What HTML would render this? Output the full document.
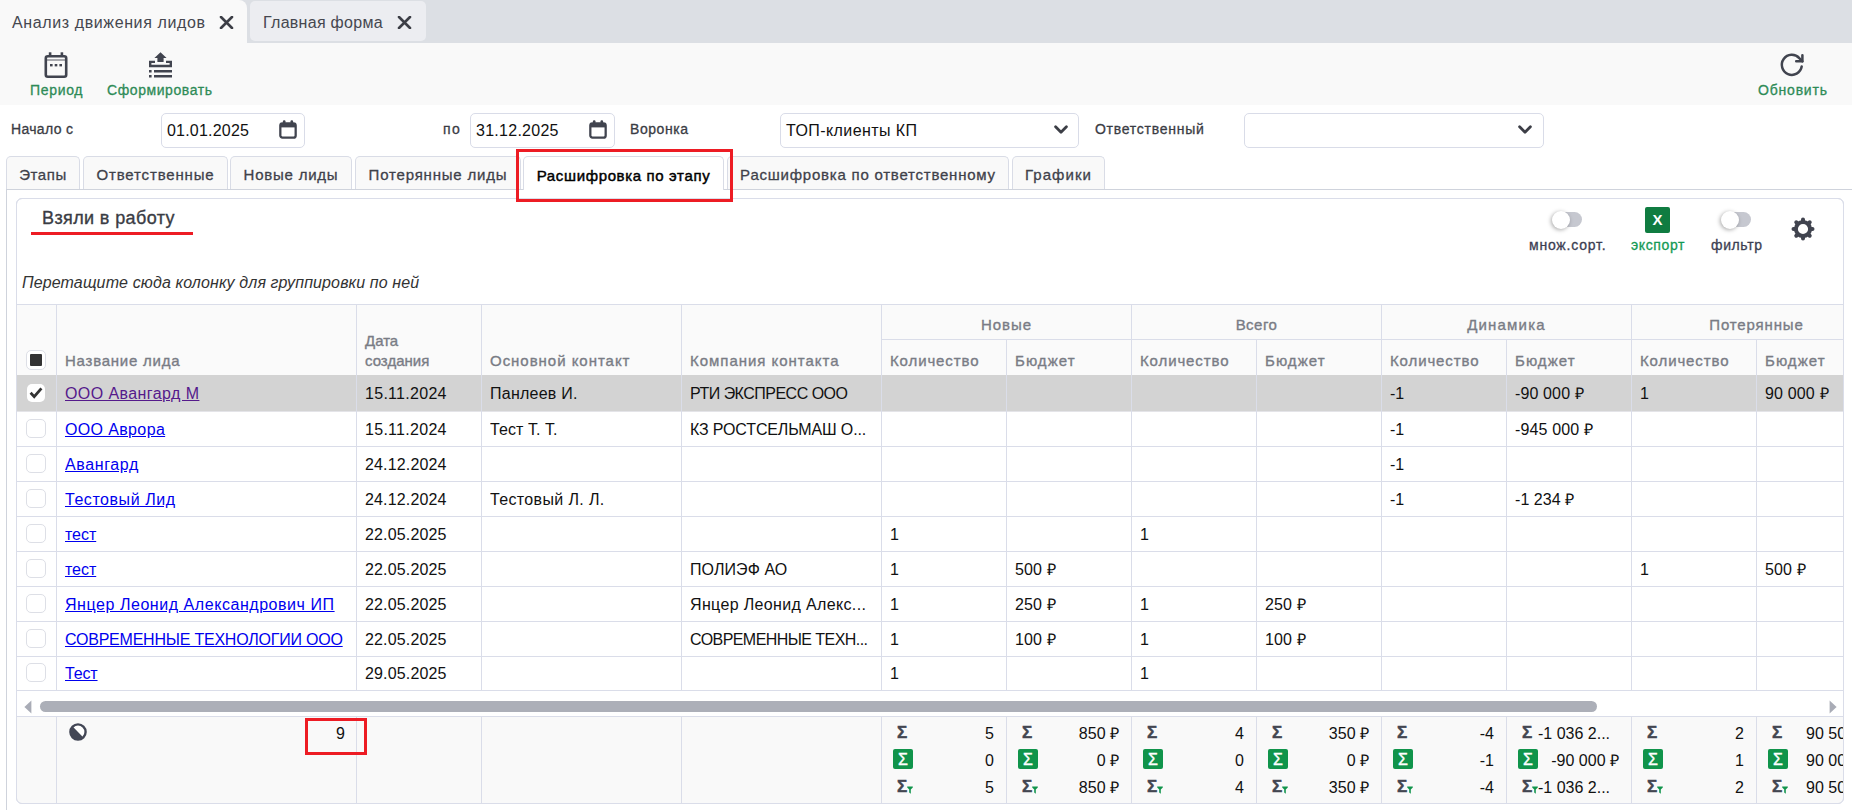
<!DOCTYPE html>
<html lang="ru"><head><meta charset="utf-8"><title>Анализ движения лидов</title>
<style>
*{box-sizing:border-box;margin:0;padding:0}
html,body{width:1852px;height:810px;overflow:hidden;background:#fff}
body{font-family:"Liberation Sans",sans-serif;font-size:16px;color:#000;position:relative}
.abs{position:absolute}
#topbar{position:absolute;left:0;top:0;width:1852px;height:43px;background:#dcdfe4}
.ttab{position:absolute;white-space:nowrap;font-size:16px;color:#45474f}
#toolbar{position:absolute;left:0;top:43px;width:1852px;height:62px;background:#f9f9f9}
.tbl{position:absolute;font-size:14px;-webkit-text-stroke:0.3px;color:#2e8b57;white-space:nowrap;text-align:center}
.flabel{position:absolute;font-size:14px;-webkit-text-stroke:0.3px;color:#3a3c44;white-space:nowrap}
.finput{position:absolute;top:113px;height:35px;border:1px solid #d9dce8;border-radius:5px;background:#fff;font-size:16px;color:#111;line-height:33px;padding-left:5px;white-space:nowrap}
.itab{position:absolute;top:156px;height:33px;border:1px solid #d9dce6;border-bottom:none;border-radius:5px 5px 0 0;background:#f9f9f9;font-size:15px;-webkit-text-stroke:0.3px;color:#3f414a;text-align:center;line-height:35px;white-space:nowrap}
.itab.act{background:#fff;color:#000;height:34px;line-height:37px;-webkit-text-stroke:0.45px}
.cell{position:absolute;white-space:nowrap;overflow:hidden;font-size:16px;line-height:20px;color:#111}
.hd{position:absolute;white-space:nowrap;font-size:15px;-webkit-text-stroke:0.35px;color:#797c85;line-height:20px}
.vl{position:absolute;width:1px;background:#dadde9}
.hl{position:absolute;height:1px;background:#dadde9}
a.lnk{color:#0000ee;text-decoration:underline}
a.lnk.v{color:#551a8b}
.cb{position:absolute;left:26px;width:20px;height:19px;border:1px solid #dddfe6;border-radius:5px;background:#fff}
.sv{position:absolute;white-space:nowrap;font-size:16px;line-height:20px;color:#111;text-align:right}
.sg{position:absolute;font-size:17px;font-weight:bold;line-height:20px;color:#434651;-webkit-text-stroke:0.5px #434651}
.sgb{position:absolute;width:20px;height:20px;background:#10944b;border-radius:2px;color:#fff;font-size:16px;-webkit-text-stroke:0.4px #fff;line-height:21px;text-align:center}
.tgl{position:absolute;font-size:14px;-webkit-text-stroke:0.3px;color:#3b3e52;white-space:nowrap}
</style></head><body>

<div id="topbar">
<div class="abs" style="left:0;top:0;width:247px;height:43px;background:#f9f9f9;border-radius:0 8px 0 0"></div>
<div class="abs" style="left:250px;top:1px;width:176px;height:40px;background:#ecedf1;border-radius:5px"></div>
<div class="ttab" id="tt1" style="letter-spacing:0.61px;left:12px;top:14px">Анализ движения лидов</div>
<div class="ttab" id="tt2" style="letter-spacing:0.28px;left:263px;top:14px">Главная форма</div>
<svg class="abs" style="left:219px;top:16px" width="15" height="13" viewBox="0 0 15 13"><path d="M2 1 L13 12 M13 1 L2 12" stroke="#3c3e46" stroke-width="2.6" stroke-linecap="round" fill="none"/></svg>
<svg class="abs" style="left:397px;top:16px" width="15" height="13" viewBox="0 0 15 13"><path d="M2 1 L13 12 M13 1 L2 12" stroke="#3c3e46" stroke-width="2.6" stroke-linecap="round" fill="none"/></svg>
</div>
<div id="toolbar"></div>
<svg class="abs" style="left:44px;top:52px" width="24" height="26" viewBox="0 0 24 26">
<rect x="1.8" y="4.3" width="20.4" height="20.4" rx="2" ry="2" fill="none" stroke="#41444f" stroke-width="2.6"/>
<rect x="4.8" y="0.3" width="2.6" height="4" fill="#41444f"/><rect x="16.6" y="0.3" width="2.6" height="4" fill="#41444f"/>
<rect x="2" y="7.2" width="20" height="1.6" fill="#41444f" opacity="0.55"/>
<rect x="6" y="12" width="2.6" height="2.4" fill="#41444f"/><rect x="10.7" y="12" width="2.6" height="2.4" fill="#41444f"/><rect x="15.4" y="12" width="2.6" height="2.4" fill="#41444f"/>
</svg>
<div class="tbl" id="tb1" style="letter-spacing:0.68px;left:30px;top:82px">Период</div>
<svg class="abs" style="left:148px;top:52px" width="25" height="26" viewBox="0 0 25 26">
<path d="M12.5 0.3 L18.6 6 L15.6 6 L15.6 10 L9.4 10 L9.4 6 L6.4 6 Z" fill="#41444f"/>
<path d="M1 8.8 L7 8.8 L7 11 L3.4 11 L3.4 12.7 L21.6 12.7 L21.6 11 L18 11 L18 8.8 L24 8.8 L24 15.2 L1 15.2 Z" fill="#41444f"/>
<rect x="1" y="18" width="2.6" height="2.5" fill="#41444f"/><rect x="6" y="18" width="18" height="2.5" fill="#41444f"/>
<rect x="1" y="23" width="2.6" height="2.5" fill="#41444f"/><rect x="6" y="23" width="18" height="2.5" fill="#41444f"/>
</svg>
<div class="tbl" id="tb2" style="letter-spacing:0.57px;left:107px;top:82px">Сформировать</div>
<svg class="abs" style="left:1779px;top:53px" width="27" height="25" viewBox="0 0 27 25">
<path d="M22.70 13.59 A10.00 10.00 0 1 1 20.28 5.16 L23.4 8.3" fill="none" stroke="#41444f" stroke-width="2.5" stroke-linecap="round" stroke-linejoin="round"/>
<path d="M23.4 2.2 L23.4 8.3 L17.2 8.3" fill="none" stroke="#41444f" stroke-width="2.5" stroke-linecap="round" stroke-linejoin="round"/>
</svg>
<div class="tbl" id="tb3" style="letter-spacing:0.80px;left:1758px;top:82px">Обновить</div>
<div class="flabel" id="fl1" style="letter-spacing:0.33px;left:11px;top:121px">Начало с</div>
<div class="finput" id="fi1" style="letter-spacing:0.21px;left:161px;width:144px">01.01.2025</div>
<div class="flabel" id="fl2" style="letter-spacing:1.38px;left:443px;top:121px">по</div>
<div class="finput" id="fi2" style="letter-spacing:0.27px;left:470px;width:145px">31.12.2025</div>
<div class="flabel" id="fl3" style="letter-spacing:0.56px;left:630px;top:121px">Воронка</div>
<div class="finput" id="fi3" style="letter-spacing:0.41px;left:780px;width:299px">ТОП-клиенты КП</div>
<div class="flabel" id="fl4" style="letter-spacing:0.73px;left:1095px;top:121px">Ответственный</div>
<div class="finput" id="fi4" style="left:1244px;width:300px"></div>
<svg class="abs" style="left:279px;top:120px" width="18" height="19" viewBox="0 0 19 19" preserveAspectRatio="none">
<rect x="1.4" y="3.4" width="16.2" height="14.2" rx="2.2" fill="none" stroke="#41444f" stroke-width="2.4"/>
<rect x="1.4" y="3.4" width="16.2" height="4" fill="#41444f"/>
<rect x="4.2" y="0.3" width="2.6" height="4" rx="1" fill="#41444f"/><rect x="12.2" y="0.3" width="2.6" height="4" rx="1" fill="#41444f"/>
</svg>
<svg class="abs" style="left:589px;top:120px" width="18" height="19" viewBox="0 0 19 19" preserveAspectRatio="none">
<rect x="1.4" y="3.4" width="16.2" height="14.2" rx="2.2" fill="none" stroke="#41444f" stroke-width="2.4"/>
<rect x="1.4" y="3.4" width="16.2" height="4" fill="#41444f"/>
<rect x="4.2" y="0.3" width="2.6" height="4" rx="1" fill="#41444f"/><rect x="12.2" y="0.3" width="2.6" height="4" rx="1" fill="#41444f"/>
</svg>
<svg class="abs" style="left:1054px;top:125px" width="14" height="10" viewBox="0 0 14 10"><path d="M1.6 1.8 L7 7.2 L12.4 1.8" fill="none" stroke="#3c3e46" stroke-width="2.8" stroke-linecap="round" stroke-linejoin="round"/></svg>
<svg class="abs" style="left:1518px;top:125px" width="14" height="10" viewBox="0 0 14 10"><path d="M1.6 1.8 L7 7.2 L12.4 1.8" fill="none" stroke="#3c3e46" stroke-width="2.8" stroke-linecap="round" stroke-linejoin="round"/></svg>
<div class="hl" style="left:6px;top:189px;width:1846px;background:#cfd3dc"></div>
<div class="vl" style="left:6px;top:189px;height:621px;background:#cfd3dc"></div>
<div class="itab" id="it0" style="letter-spacing:0.57px;left:6px;width:74px">Этапы</div>
<div class="itab" id="it1" style="letter-spacing:0.85px;left:83px;width:145px">Ответственные</div>
<div class="itab" id="it2" style="letter-spacing:0.77px;left:230px;width:122px">Новые лиды</div>
<div class="itab" id="it3" style="letter-spacing:0.81px;left:355px;width:166px">Потерянные лиды</div>
<div class="itab" id="it4" style="letter-spacing:0.77px;left:727px;width:282px">Расшифровка по ответственному</div>
<div class="itab" id="it5" style="letter-spacing:1.06px;left:1012px;width:93px">Графики</div>
<div class="itab act" id="ita" style="letter-spacing:0.64px;left:523px;width:201px">Расшифровка по этапу</div>
<div class="abs" style="left:516px;top:149px;width:217px;height:53px;border:3px solid #ed1c24;z-index:20"></div>
<div class="abs" id="panel" style="left:16px;top:198px;width:1828px;height:606px;border:1px solid #dadde9;border-radius:6px;overflow:hidden">
</div>
<div class="abs" id="ttl" style="letter-spacing:0.38px;left:42px;top:208px;font-size:18px;-webkit-text-stroke:0.35px;color:#3a3c44;white-space:nowrap">Взяли в работу</div>
<div class="abs" style="left:31px;top:232px;width:162px;height:3px;background:#ed1c24"></div>
<div class="abs" id="grp" style="letter-spacing:0.12px;left:22px;top:273px;font-size:16px;font-style:italic;color:#333;white-space:nowrap;line-height:20px">Перетащите сюда колонку для группировки по ней</div>
<div class="abs" style="left:1555px;top:212px;width:27px;height:15px;border-radius:8px;background:#c6c8d0"></div>
<div class="abs" style="left:1551.6px;top:210.5px;width:18.6px;height:18.6px;border-radius:10px;background:#fff;box-shadow:-1px 1px 4px rgba(0,0,0,.35)"></div>
<div class="abs" style="left:1724px;top:212px;width:27px;height:15px;border-radius:8px;background:#c6c8d0"></div>
<div class="abs" style="left:1720.6px;top:210.5px;width:18.6px;height:18.6px;border-radius:10px;background:#fff;box-shadow:-1px 1px 4px rgba(0,0,0,.35)"></div>
<div class="tgl" id="tg1" style="letter-spacing:0.79px;left:1529px;top:237px">множ.сорт.</div>
<div class="tgl" id="tg2" style="letter-spacing:0.64px;left:1631px;top:237px;color:#149a55">экспорт</div>
<div class="tgl" id="tg3" style="letter-spacing:0.62px;left:1711px;top:237px">фильтр</div>
<div class="abs" id="xl" style="left:1645px;top:207px;width:25px;height:26px;background:#107c41;border-radius:2px;color:#fff;font-weight:bold;font-size:15px;line-height:26px;text-align:center">X</div>
<svg class="abs" style="left:1791px;top:217px" width="24" height="24" viewBox="0 0 24 24"><circle cx="12" cy="12" r="7.1" fill="none" stroke="#41444f" stroke-width="4"/><path d="M12.00 3.80 L12.00 2.50 M17.80 6.20 L18.72 5.28 M20.20 12.00 L21.50 12.00 M17.80 17.80 L18.72 18.72 M12.00 20.20 L12.00 21.50 M6.20 17.80 L5.28 18.72 M3.80 12.00 L2.50 12.00 M6.20 6.20 L5.28 5.28" fill="none" stroke="#41444f" stroke-width="4" stroke-linecap="round"/></svg>
<div class="abs" style="left:17px;top:305px;width:1826px;height:70px;background:#fafafa"></div>
<div class="hl" style="left:17px;top:304px;width:1826px"></div>
<div class="hl" style="left:882px;top:339px;width:961px"></div>
<div class="hl" style="left:17px;top:375px;width:1826px"></div>
<div class="abs" style="left:17px;top:375px;width:1826px;height:36px;background:#d3d3d3"></div><div class="hl" style="left:17px;top:411px;width:1826px;background:#e4e4e8"></div>
<div class="abs" style="left:17px;top:717px;width:1826px;height:86px;background:#f9f9f9;border-radius:0 0 5px 5px"></div>
<div class="hl" style="left:17px;top:716px;width:1826px"></div>
<div class="hl" style="left:17px;top:446px;width:1826px"></div>
<div class="hl" style="left:17px;top:481px;width:1826px"></div>
<div class="hl" style="left:17px;top:516px;width:1826px"></div>
<div class="hl" style="left:17px;top:551px;width:1826px"></div>
<div class="hl" style="left:17px;top:586px;width:1826px"></div>
<div class="hl" style="left:17px;top:621px;width:1826px"></div>
<div class="hl" style="left:17px;top:656px;width:1826px"></div>
<div class="hl" style="left:17px;top:690px;width:1826px"></div>
<div class="vl" style="left:56px;top:305px;height:385px"></div>
<div class="vl" style="left:56px;top:717px;height:86px"></div>
<div class="vl" style="left:356px;top:305px;height:385px"></div>
<div class="vl" style="left:356px;top:717px;height:86px"></div>
<div class="vl" style="left:481px;top:305px;height:385px"></div>
<div class="vl" style="left:481px;top:717px;height:86px"></div>
<div class="vl" style="left:681px;top:305px;height:385px"></div>
<div class="vl" style="left:681px;top:717px;height:86px"></div>
<div class="vl" style="left:881px;top:305px;height:385px"></div>
<div class="vl" style="left:881px;top:717px;height:86px"></div>
<div class="vl" style="left:1006px;top:340px;height:350px"></div>
<div class="vl" style="left:1006px;top:717px;height:86px"></div>
<div class="vl" style="left:1131px;top:305px;height:385px"></div>
<div class="vl" style="left:1131px;top:717px;height:86px"></div>
<div class="vl" style="left:1256px;top:340px;height:350px"></div>
<div class="vl" style="left:1256px;top:717px;height:86px"></div>
<div class="vl" style="left:1381px;top:305px;height:385px"></div>
<div class="vl" style="left:1381px;top:717px;height:86px"></div>
<div class="vl" style="left:1506px;top:340px;height:350px"></div>
<div class="vl" style="left:1506px;top:717px;height:86px"></div>
<div class="vl" style="left:1631px;top:305px;height:385px"></div>
<div class="vl" style="left:1631px;top:717px;height:86px"></div>
<div class="vl" style="left:1756px;top:340px;height:350px"></div>
<div class="vl" style="left:1756px;top:717px;height:86px"></div>
<div class="abs" style="left:26px;top:350px;width:20px;height:20px;border:1px solid #dddfe6;border-radius:5px;background:#fff"></div>
<div class="abs" style="left:30px;top:354px;width:12px;height:12px;background:#333;border-radius:1px"></div>
<div class="hd" id="h0" style="letter-spacing:0.76px;left:65px;top:351px">Название лида</div>
<div class="hd" id="h1" style="left:365px;top:331px">Дата<br>создания</div>
<div class="hd" id="h2" style="letter-spacing:0.97px;left:490px;top:351px">Основной контакт</div>
<div class="hd" id="h3" style="letter-spacing:0.97px;left:690px;top:351px">Компания контакта</div>
<div class="hd" id="g0" style="letter-spacing:0.93px;left:882px;top:315px;width:249px;text-align:center">Новые</div>
<div class="hd" id="k0" style="letter-spacing:0.88px;left:890px;top:351px">Количество</div>
<div class="hd" id="b0" style="letter-spacing:1.05px;left:1015px;top:351px">Бюджет</div>
<div class="hd" id="g1" style="letter-spacing:0.48px;left:1132px;top:315px;width:249px;text-align:center">Всего</div>
<div class="hd" id="k1" style="letter-spacing:0.88px;left:1140px;top:351px">Количество</div>
<div class="hd" id="b1" style="letter-spacing:1.05px;left:1265px;top:351px">Бюджет</div>
<div class="hd" id="g2" style="letter-spacing:1.20px;left:1382px;top:315px;width:249px;text-align:center">Динамика</div>
<div class="hd" id="k2" style="letter-spacing:0.88px;left:1390px;top:351px">Количество</div>
<div class="hd" id="b2" style="letter-spacing:1.05px;left:1515px;top:351px">Бюджет</div>
<div class="hd" id="g3" style="letter-spacing:0.85px;left:1632px;top:315px;width:249px;text-align:center">Потерянные</div>
<div class="hd" id="k3" style="letter-spacing:0.88px;left:1640px;top:351px">Количество</div>
<div class="hd" id="b3" style="letter-spacing:1.05px;left:1765px;top:351px">Бюджет</div>
<div class="cb" style="top:384px;height:18px;left:27px;width:18px;border:none"></div>
<svg class="abs" style="left:29px;top:386px" width="14" height="13" viewBox="0 0 14 13"><path d="M1.6 6.8 L5.2 10.6 L12.4 2.4" fill="none" stroke="#333" stroke-width="2.8"/></svg>
<div class="cell" id="c0_0" style="letter-spacing:0.42px;left:65px;top:384px;width:283px"><a class="lnk v">ООО Авангард М</a></div>
<div class="cell" id="c0_1" style="letter-spacing:0.29px;left:365px;top:384px;width:108px">15.11.2024</div>
<div class="cell" id="c0_2" style="letter-spacing:0.25px;left:490px;top:384px;width:183px">Панлеев И.</div>
<div class="cell" id="c0_3" style="letter-spacing:-0.51px;left:690px;top:384px;width:183px">РТИ ЭКСПРЕСС ООО</div>
<div class="cell" id="c0_8" style="left:1390px;top:384px;width:108px">-1</div>
<div class="cell" id="c0_9" style="letter-spacing:0.13px;left:1515px;top:384px;width:108px">-90 000 ₽</div>
<div class="cell" id="c0_10" style="left:1640px;top:384px;width:108px">1</div>
<div class="cell" id="c0_11" style="letter-spacing:0.16px;left:1765px;top:384px;width:108px">90 000 ₽</div>
<div class="cb" style="top:419px"></div>
<div class="cell" id="c1_0" style="letter-spacing:0.36px;left:65px;top:420px;width:283px"><a class="lnk">ООО Аврора</a></div>
<div class="cell" id="c1_1" style="letter-spacing:0.29px;left:365px;top:420px;width:108px">15.11.2024</div>
<div class="cell" id="c1_2" style="letter-spacing:0.07px;left:490px;top:420px;width:183px">Тест Т. Т.</div>
<div class="cell" id="c1_3" style="letter-spacing:-0.13px;left:690px;top:420px;width:183px">КЗ РОСТСЕЛЬМАШ О...</div>
<div class="cell" id="c1_8" style="left:1390px;top:420px;width:108px">-1</div>
<div class="cell" id="c1_9" style="letter-spacing:0.15px;left:1515px;top:420px;width:108px">-945 000 ₽</div>
<div class="cb" style="top:454px"></div>
<div class="cell" id="c2_0" style="letter-spacing:0.61px;left:65px;top:455px;width:283px"><a class="lnk">Авангард</a></div>
<div class="cell" id="c2_1" style="letter-spacing:0.16px;left:365px;top:455px;width:108px">24.12.2024</div>
<div class="cell" id="c2_8" style="left:1390px;top:455px;width:108px">-1</div>
<div class="cb" style="top:489px"></div>
<div class="cell" id="c3_0" style="letter-spacing:0.55px;left:65px;top:490px;width:283px"><a class="lnk">Тестовый Лид</a></div>
<div class="cell" id="c3_1" style="letter-spacing:0.16px;left:365px;top:490px;width:108px">24.12.2024</div>
<div class="cell" id="c3_2" style="letter-spacing:0.36px;left:490px;top:490px;width:183px">Тестовый Л. Л.</div>
<div class="cell" id="c3_8" style="left:1390px;top:490px;width:108px">-1</div>
<div class="cell" id="c3_9" style="letter-spacing:0.06px;left:1515px;top:490px;width:108px">-1 234 ₽</div>
<div class="cb" style="top:524px"></div>
<div class="cell" id="c4_0" style="letter-spacing:-0.04px;left:65px;top:525px;width:283px"><a class="lnk">тест</a></div>
<div class="cell" id="c4_1" style="letter-spacing:0.16px;left:365px;top:525px;width:108px">22.05.2025</div>
<div class="cell" id="c4_4" style="left:890px;top:525px;width:108px">1</div>
<div class="cell" id="c4_6" style="left:1140px;top:525px;width:108px">1</div>
<div class="cb" style="top:559px"></div>
<div class="cell" id="c5_0" style="letter-spacing:-0.04px;left:65px;top:560px;width:283px"><a class="lnk">тест</a></div>
<div class="cell" id="c5_1" style="letter-spacing:0.16px;left:365px;top:560px;width:108px">22.05.2025</div>
<div class="cell" id="c5_3" style="letter-spacing:0.08px;left:690px;top:560px;width:183px">ПОЛИЭФ АО</div>
<div class="cell" id="c5_4" style="left:890px;top:560px;width:108px">1</div>
<div class="cell" id="c5_5" style="letter-spacing:0.09px;left:1015px;top:560px;width:108px">500 ₽</div>
<div class="cell" id="c5_10" style="left:1640px;top:560px;width:108px">1</div>
<div class="cell" id="c5_11" style="letter-spacing:0.09px;left:1765px;top:560px;width:108px">500 ₽</div>
<div class="cb" style="top:594px"></div>
<div class="cell" id="c6_0" style="letter-spacing:0.55px;left:65px;top:595px;width:283px"><a class="lnk">Янцер Леонид Александрович ИП</a></div>
<div class="cell" id="c6_1" style="letter-spacing:0.16px;left:365px;top:595px;width:108px">22.05.2025</div>
<div class="cell" id="c6_3" style="letter-spacing:0.35px;left:690px;top:595px;width:183px">Янцер Леонид Алекс...</div>
<div class="cell" id="c6_4" style="left:890px;top:595px;width:108px">1</div>
<div class="cell" id="c6_5" style="letter-spacing:0.09px;left:1015px;top:595px;width:108px">250 ₽</div>
<div class="cell" id="c6_6" style="left:1140px;top:595px;width:108px">1</div>
<div class="cell" id="c6_7" style="letter-spacing:0.09px;left:1265px;top:595px;width:108px">250 ₽</div>
<div class="cb" style="top:629px"></div>
<div class="cell" id="c7_0" style="letter-spacing:-0.22px;left:65px;top:630px;width:283px"><a class="lnk">СОВРЕМЕННЫЕ ТЕХНОЛОГИИ ООО</a></div>
<div class="cell" id="c7_1" style="letter-spacing:0.16px;left:365px;top:630px;width:108px">22.05.2025</div>
<div class="cell" id="c7_3" style="letter-spacing:-0.56px;left:690px;top:630px;width:183px">СОВРЕМЕННЫЕ ТЕХН...</div>
<div class="cell" id="c7_4" style="left:890px;top:630px;width:108px">1</div>
<div class="cell" id="c7_5" style="letter-spacing:0.09px;left:1015px;top:630px;width:108px">100 ₽</div>
<div class="cell" id="c7_6" style="left:1140px;top:630px;width:108px">1</div>
<div class="cell" id="c7_7" style="letter-spacing:0.09px;left:1265px;top:630px;width:108px">100 ₽</div>
<div class="cb" style="top:663px"></div>
<div class="cell" id="c8_0" style="letter-spacing:-0.14px;left:65px;top:664px;width:283px"><a class="lnk">Тест</a></div>
<div class="cell" id="c8_1" style="letter-spacing:0.16px;left:365px;top:664px;width:108px">29.05.2025</div>
<div class="cell" id="c8_4" style="left:890px;top:664px;width:108px">1</div>
<div class="cell" id="c8_6" style="left:1140px;top:664px;width:108px">1</div>
<svg class="abs" style="left:24px;top:700px" width="8" height="14" viewBox="0 0 8 14"><path d="M7.4 0.4 L0.4 7 L7.4 13.6 Z" fill="#a9acb6"/></svg>
<svg class="abs" style="left:1829px;top:700px" width="8" height="14" viewBox="0 0 8 14"><path d="M0.6 0.4 L7.6 7 L0.6 13.6 Z" fill="#a9acb6"/></svg>
<div class="abs" style="left:40px;top:701px;width:1557px;height:11px;border-radius:6px;background:#acafb8"></div>
<svg class="abs" style="left:69px;top:723px" width="18" height="18" viewBox="0 0 18 18"><circle cx="9" cy="9" r="7.6" fill="#fff" stroke="#434756" stroke-width="2.4"/><path d="M3.6 3.6 A7.6 7.6 0 0 0 14.4 14.4 Z" fill="#434756"/></svg>
<div class="sv" id="cnt" style="left:300px;top:724px;width:45px">9</div>
<div class="abs" style="left:305px;top:718px;width:62px;height:37px;border:3px solid #ed1c24;z-index:20"></div>
<div class="sv" id="s0_0" style="left:894px;top:724px;width:100px">5</div>
<div class="sg" style="left:897px;top:723px">Σ</div>
<div class="sv" id="s0_1" style="left:894px;top:751px;width:100px">0</div>
<div class="sgb" style="left:893px;top:749px">Σ</div>
<div class="sv" id="s0_2" style="left:894px;top:778px;width:100px">5</div>
<div class="sg" style="left:897px;top:777px">Σ</div>
<svg class="abs" style="left:907px;top:786px" width="6" height="8" viewBox="0 0 6 8"><path d="M0.2 0.4 H5.8 V1.4 L3.8 3.6 V7.8 L2.2 6.6 V3.6 L0.2 1.4 Z" fill="#10944b"/></svg>
<div class="sv" id="s1_0" style="left:1019px;top:724px;width:100px">850 ₽</div>
<div class="sg" style="left:1022px;top:723px">Σ</div>
<div class="sv" id="s1_1" style="left:1019px;top:751px;width:100px">0 ₽</div>
<div class="sgb" style="left:1018px;top:749px">Σ</div>
<div class="sv" id="s1_2" style="left:1019px;top:778px;width:100px">850 ₽</div>
<div class="sg" style="left:1022px;top:777px">Σ</div>
<svg class="abs" style="left:1032px;top:786px" width="6" height="8" viewBox="0 0 6 8"><path d="M0.2 0.4 H5.8 V1.4 L3.8 3.6 V7.8 L2.2 6.6 V3.6 L0.2 1.4 Z" fill="#10944b"/></svg>
<div class="sv" id="s2_0" style="left:1144px;top:724px;width:100px">4</div>
<div class="sg" style="left:1147px;top:723px">Σ</div>
<div class="sv" id="s2_1" style="left:1144px;top:751px;width:100px">0</div>
<div class="sgb" style="left:1143px;top:749px">Σ</div>
<div class="sv" id="s2_2" style="left:1144px;top:778px;width:100px">4</div>
<div class="sg" style="left:1147px;top:777px">Σ</div>
<svg class="abs" style="left:1157px;top:786px" width="6" height="8" viewBox="0 0 6 8"><path d="M0.2 0.4 H5.8 V1.4 L3.8 3.6 V7.8 L2.2 6.6 V3.6 L0.2 1.4 Z" fill="#10944b"/></svg>
<div class="sv" id="s3_0" style="left:1269px;top:724px;width:100px">350 ₽</div>
<div class="sg" style="left:1272px;top:723px">Σ</div>
<div class="sv" id="s3_1" style="left:1269px;top:751px;width:100px">0 ₽</div>
<div class="sgb" style="left:1268px;top:749px">Σ</div>
<div class="sv" id="s3_2" style="left:1269px;top:778px;width:100px">350 ₽</div>
<div class="sg" style="left:1272px;top:777px">Σ</div>
<svg class="abs" style="left:1282px;top:786px" width="6" height="8" viewBox="0 0 6 8"><path d="M0.2 0.4 H5.8 V1.4 L3.8 3.6 V7.8 L2.2 6.6 V3.6 L0.2 1.4 Z" fill="#10944b"/></svg>
<div class="sv" id="s4_0" style="left:1394px;top:724px;width:100px">-4</div>
<div class="sg" style="left:1397px;top:723px">Σ</div>
<div class="sv" id="s4_1" style="left:1394px;top:751px;width:100px">-1</div>
<div class="sgb" style="left:1393px;top:749px">Σ</div>
<div class="sv" id="s4_2" style="left:1394px;top:778px;width:100px">-4</div>
<div class="sg" style="left:1397px;top:777px">Σ</div>
<svg class="abs" style="left:1407px;top:786px" width="6" height="8" viewBox="0 0 6 8"><path d="M0.2 0.4 H5.8 V1.4 L3.8 3.6 V7.8 L2.2 6.6 V3.6 L0.2 1.4 Z" fill="#10944b"/></svg>
<div class="sv" id="s5_0" style="left:1538px;top:724px;text-align:left;width:90px">-1 036 2...</div>
<div class="sg" style="left:1522px;top:723px">Σ</div>
<div class="sv" id="s5_1" style="left:1519px;top:751px;width:100px">-90 000 ₽</div>
<div class="sgb" style="left:1518px;top:749px">Σ</div>
<div class="sv" id="s5_2" style="left:1538px;top:778px;text-align:left;width:90px">-1 036 2...</div>
<div class="sg" style="left:1522px;top:777px">Σ</div>
<svg class="abs" style="left:1532px;top:786px" width="6" height="8" viewBox="0 0 6 8"><path d="M0.2 0.4 H5.8 V1.4 L3.8 3.6 V7.8 L2.2 6.6 V3.6 L0.2 1.4 Z" fill="#10944b"/></svg>
<div class="sv" id="s6_0" style="left:1644px;top:724px;width:100px">2</div>
<div class="sg" style="left:1647px;top:723px">Σ</div>
<div class="sv" id="s6_1" style="left:1644px;top:751px;width:100px">1</div>
<div class="sgb" style="left:1643px;top:749px">Σ</div>
<div class="sv" id="s6_2" style="left:1644px;top:778px;width:100px">2</div>
<div class="sg" style="left:1647px;top:777px">Σ</div>
<svg class="abs" style="left:1657px;top:786px" width="6" height="8" viewBox="0 0 6 8"><path d="M0.2 0.4 H5.8 V1.4 L3.8 3.6 V7.8 L2.2 6.6 V3.6 L0.2 1.4 Z" fill="#10944b"/></svg>
<div class="sv" id="s7_0" style="left:1806px;top:724px;text-align:left;width:80px;overflow:hidden">90 500 ₽</div>
<div class="sg" style="left:1772px;top:723px">Σ</div>
<div class="sv" id="s7_1" style="left:1806px;top:751px;text-align:left;width:80px;overflow:hidden">90 000 ₽</div>
<div class="sgb" style="left:1768px;top:749px">Σ</div>
<div class="sv" id="s7_2" style="left:1806px;top:778px;text-align:left;width:80px;overflow:hidden">90 500 ₽</div>
<div class="sg" style="left:1772px;top:777px">Σ</div>
<svg class="abs" style="left:1782px;top:786px" width="6" height="8" viewBox="0 0 6 8"><path d="M0.2 0.4 H5.8 V1.4 L3.8 3.6 V7.8 L2.2 6.6 V3.6 L0.2 1.4 Z" fill="#10944b"/></svg>
<div class="abs" style="left:1844px;top:200px;width:8px;height:610px;background:#fff"></div>
<div class="abs" style="left:16px;top:198px;width:1828px;height:606px;border:1px solid #dadde9;border-radius:6px;pointer-events:none"></div>
</body></html>
